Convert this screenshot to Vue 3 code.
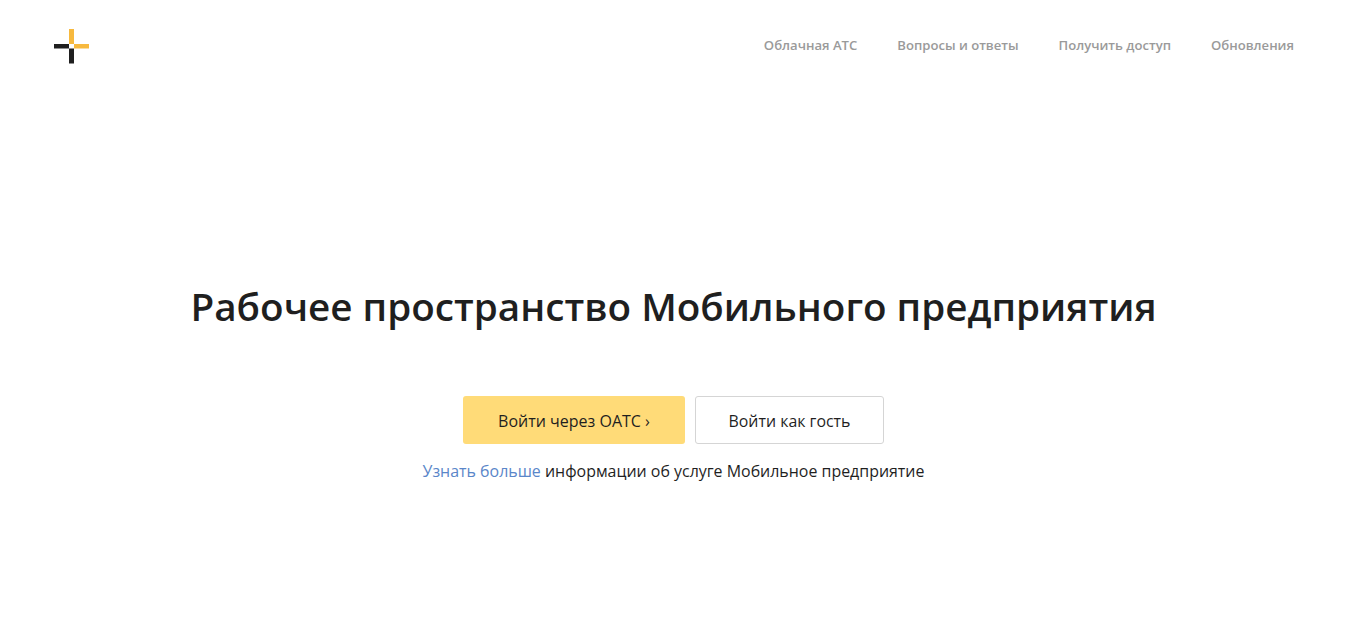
<script setup>
const links = ['Облачная АТС', 'Вопросы и ответы', 'Получить доступ', 'Обновления']
</script>

<template>
  <div class="page">
    <header class="header">
      <a class="logo" href="#">
        <svg width="36" height="36" viewBox="0 0 36 36">
          <rect x="15" y="0" width="5" height="15" fill="#f7b93e" />
          <rect x="20" y="15" width="15" height="4.5" fill="#f7b93e" />
          <rect x="0" y="15" width="15" height="4.5" fill="#1f1f1f" />
          <rect x="15" y="19.5" width="5" height="15" fill="#1f1f1f" />
        </svg>
      </a>
      <nav class="nav">
        <a v-for="link in links" :key="link" href="#">{{ link }}</a>
      </nav>
    </header>
    <main class="main">
      <h1>Рабочее пространство Мобильного предприятия</h1>
      <div class="buttons">
        <a class="btn primary" href="#">Войти через ОАТС ›</a>
        <a class="btn ghost" href="#">Войти как гость</a>
      </div>
      <p class="info"><a href="#">Узнать больше</a> информации об услуге Мобильное предприятие</p>
    </main>
  </div>
</template>

<style>
body {
  background: #fff;
}
</style>

<style scoped>
.page {
  height: 623px;
  font-family: "Open Sans", "Noto Sans", sans-serif;
  color: #1f1f1f;
  overflow: hidden;
}

a {
  text-decoration: none;
}

.header {
  display: flex;
  justify-content: space-between;
  align-items: flex-start;
  padding: 29px 53px 0 54px;
}

.logo {
  display: block;
  height: 36px;
}

.logo svg {
  display: block;
}

.nav {
  display: flex;
  gap: 40px;
  padding-top: 6px;
}

.nav a {
  font-size: 13.1px;
  line-height: 20px;
  font-weight: 600;
  color: #9a9a9a;
}

.main {
  display: flex;
  flex-direction: column;
  align-items: center;
  padding-top: 215px;
}

h1 {
  margin: 0;
  font-size: 38.65px;
  line-height: 52px;
  font-weight: 600;
  color: #1f1f1f;
}

.buttons {
  display: flex;
  gap: 10px;
  margin-top: 64px;
}

.btn {
  display: flex;
  align-items: center;
  justify-content: center;
  height: 48px;
  box-sizing: border-box;
  padding-top: 2px;
  border-radius: 3px;
  color: #1f1f1f;
}

.primary {
  width: 222px;
  font-size: 16px;
  background: #ffdb78;
}

.ghost {
  width: 189px;
  font-size: 15.9px;
  border: 1px solid #d5d5d5;
}

.info {
  margin: 16px 0 0;
  font-size: 15.95px;
  line-height: 22px;
  color: #1f1f1f;
}

.info a {
  color: #5a86c9;
}
</style>
